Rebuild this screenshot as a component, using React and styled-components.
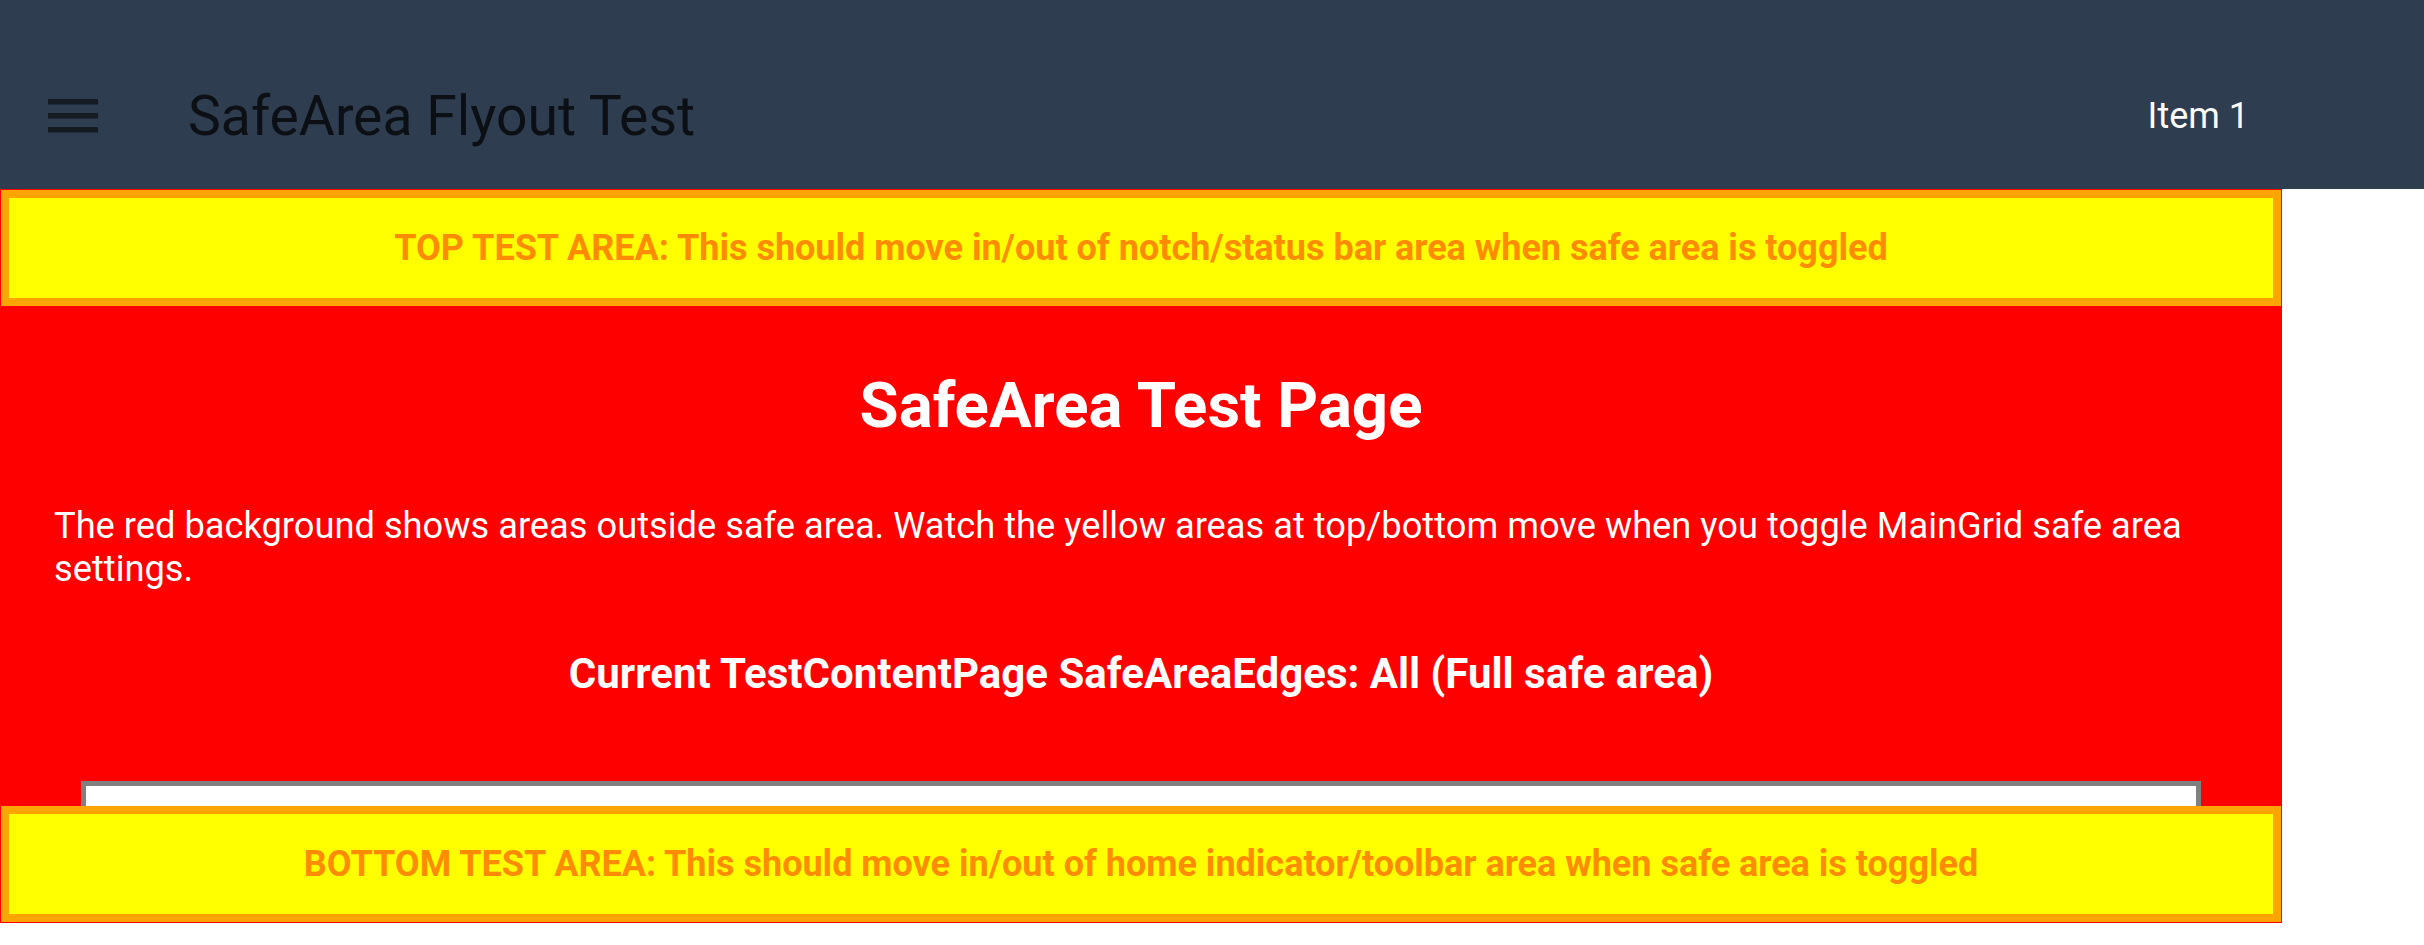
import React from 'react';
import styled, { createGlobalStyle } from 'styled-components';

const GlobalStyle = createGlobalStyle`
  html, body {
    margin: 0;
    padding: 0;
    background: #ffffff;
    font-family: Roboto, "Liberation Sans", sans-serif;
  }
`;

const Shell = styled.div`
  width: 2424px;
  display: flex;
  flex-direction: column;
`;

const NavBar = styled.div`
  height: 189px;
  box-sizing: border-box;
  padding: 43px 175px 0 48px;
  background: #2e3d50;
  display: flex;
  align-items: center;
`;

const MenuButton = styled.div`
  width: 50px;
  height: 34px;
  display: flex;
`;

const NavTitle = styled.div`
  margin-left: 90px;
  font-size: 55.3px;
  color: #0c0f13;
  flex: 1;
`;

const NavItem = styled.div`
  font-size: 36px;
  color: #ffffff;
`;

const Page = styled.div`
  width: 2282px;
  height: 734px;
  box-sizing: border-box;
  padding: 1px;
  background: #ff0000;
  display: flex;
  flex-direction: column;
`;

const TestArea = styled.div`
  height: 116px;
  flex-shrink: 0;
  box-sizing: border-box;
  border: 8px solid #ffa500;
  background: #ffff00;
  display: flex;
  align-items: center;
  justify-content: center;
  font-size: 36px;
  font-weight: 700;
  color: #ff8c00;
`;

const Scroller = styled.div`
  flex: 1;
  overflow: hidden;
  padding: 62px 53px 0;
  color: #ffffff;
`;

const PageTitle = styled.h1`
  margin: 0;
  font-size: 63.5px;
  font-weight: 700;
  text-align: center;
`;

const Description = styled.p`
  margin: 61px 0 0;
  font-size: 36.25px;
`;

const CurrentEdges = styled.div`
  margin-top: 59px;
  font-size: 42px;
  font-weight: 700;
  text-align: center;
`;

const EntryBox = styled.div`
  margin: 83px 27px 0;
  height: 120px;
  border: 5px solid #808080;
  background: #ffffff;
`;

const MenuIcon = () => (
  <svg width="50" height="34" viewBox="0 0 50 34">
    <rect x="0" y="0" width="50" height="5.5" fill="#151b22" />
    <rect x="0" y="14" width="50" height="5.5" fill="#151b22" />
    <rect x="0" y="28" width="50" height="5.5" fill="#151b22" />
  </svg>
);

const App = () => {
  return (
    <Shell>
      <GlobalStyle />
      <NavBar>
        <MenuButton>
          <MenuIcon />
        </MenuButton>
        <NavTitle>SafeArea Flyout Test</NavTitle>
        <NavItem>Item 1</NavItem>
      </NavBar>
      <Page>
        <TestArea>
          TOP TEST AREA: This should move in/out of notch/status bar area when safe area is toggled
        </TestArea>
        <Scroller>
          <PageTitle>SafeArea Test Page</PageTitle>
          <Description>
            The red background shows areas outside safe area. Watch the yellow areas at top/bottom move
            when you toggle MainGrid safe area settings.
          </Description>
          <CurrentEdges>Current TestContentPage SafeAreaEdges: All (Full safe area)</CurrentEdges>
          <EntryBox />
        </Scroller>
        <TestArea>
          BOTTOM TEST AREA: This should move in/out of home indicator/toolbar area when safe area is toggled
        </TestArea>
      </Page>
    </Shell>
  );
};

export default App;
